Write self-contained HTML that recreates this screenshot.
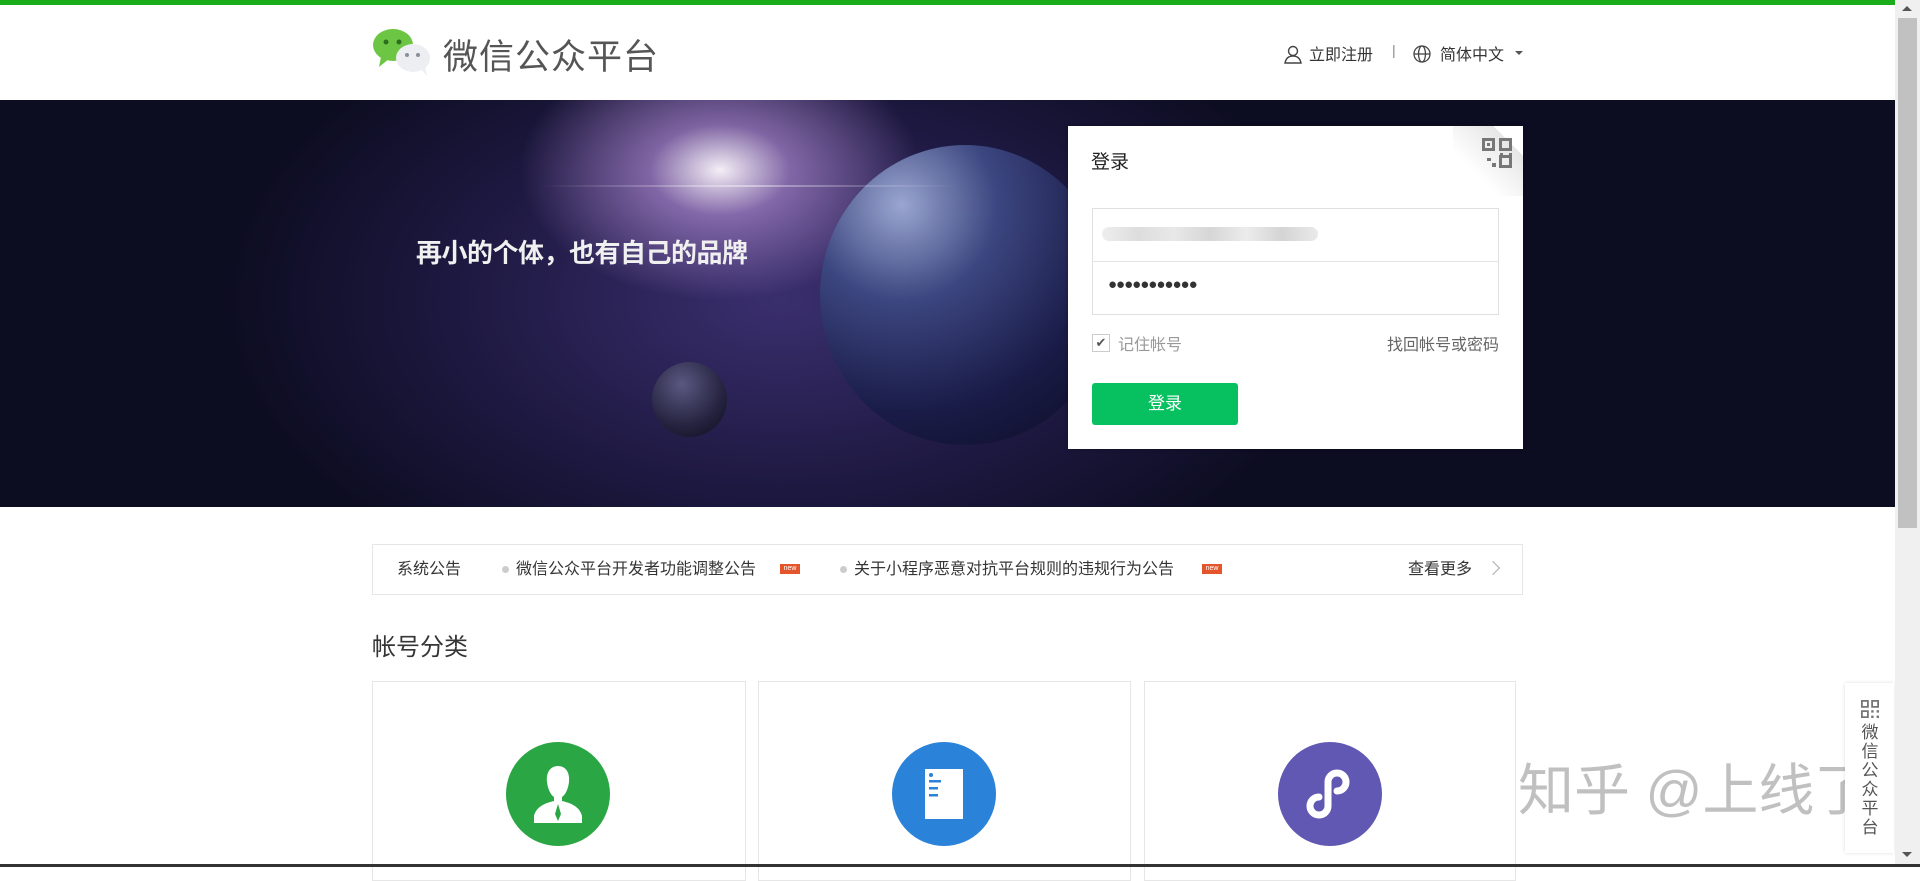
<!DOCTYPE html>
<html><head><meta charset="utf-8"><style>
*{margin:0;padding:0;box-sizing:border-box}
body{width:1920px;height:867px;overflow:hidden;background:#fff;font-family:"Liberation Sans","Noto Sans CJK SC",sans-serif;position:relative;color:#353535}
.abs{position:absolute}
</style></head><body>
<div class="abs" style="left:0;top:0;width:1895px;height:5px;background:#1aad19"></div>
<!-- logo -->
<svg class="abs" style="left:371px;top:27px" width="62" height="50" viewBox="0 0 62 50">
<ellipse cx="22" cy="18" rx="20" ry="16" fill="#6cc644"/><path d="M10 30 L8 40 L18 32Z" fill="#6cc644"/>
<circle cx="15" cy="15" r="2.5" fill="#2d6e1e"/><circle cx="28" cy="15" r="2.5" fill="#2d6e1e"/>
<ellipse cx="42" cy="31" rx="17" ry="14" fill="#eceef2"/><path d="M50 42 L56 49 L54 40Z" fill="#eceef2"/>
<circle cx="36" cy="28" r="2" fill="#8a8f99"/><circle cx="47" cy="28" r="2" fill="#8a8f99"/></svg>
<div class="abs" style="left:443px;top:29px;font-size:35px;color:#555;letter-spacing:1px">微信公众平台</div>
<svg class="abs" style="left:1283px;top:44px" width="20" height="20" viewBox="0 0 20 20" fill="none" stroke="#444" stroke-width="1.4"><circle cx="10" cy="7" r="4.5"/><path d="M2 19c1-5 4-7 8-7s7 2 8 7Z"/></svg>
<div class="abs" style="left:1309px;top:41px;font-size:16px;color:#353535">立即注册</div>
<div class="abs" style="left:1392px;top:42px;font-size:14px;color:#888">|</div>
<svg class="abs" style="left:1412px;top:44px" width="20" height="20" viewBox="0 0 20 20" fill="none" stroke="#444" stroke-width="1.3"><circle cx="10" cy="10" r="8"/><ellipse cx="10" cy="10" rx="3.5" ry="8"/><path d="M2 10h16"/></svg>
<div class="abs" style="left:1440px;top:41px;font-size:16px;color:#353535">简体中文</div>
<div class="abs" style="left:1515px;top:51px;border:4px solid transparent;border-top-color:#555"></div>
<!-- banner -->
<div class="abs" style="left:0;top:100px;width:1895px;height:407px;overflow:hidden;background:radial-gradient(ellipse 200px 130px at 720px 70px,rgba(255,250,255,.95),rgba(190,150,225,.6) 35%,rgba(60,40,110,0) 100%),radial-gradient(ellipse 550px 320px at 780px 200px,#3a2f6e,#1d1840 60%,#0d0d22 100%),#0e0e22">
 <div class="abs" style="left:820px;top:45px;width:290px;height:300px;border-radius:50%;background:radial-gradient(circle at 28% 20%,#9aa6d0,#3c4680 30%,#1a1c48 65%,#0a0a20)"></div>
 <div class="abs" style="left:652px;top:262px;width:75px;height:75px;border-radius:50%;background:radial-gradient(circle at 40% 30%,#5a5880,#25233f 60%,#0d0c1e)"></div>
 <div class="abs" style="left:540px;top:85px;width:420px;height:2px;background:linear-gradient(90deg,rgba(255,255,255,0),rgba(255,255,255,.4),rgba(255,255,255,0))"></div>
 <div class="abs" style="left:416px;top:133px;font-size:26px;color:#f0f0f0;font-weight:bold;letter-spacing:-0.5px">再小的个体，也有自己的品牌</div>
</div>
<!-- login -->
<div class="abs" style="left:1068px;top:126px;width:455px;height:323px;background:#fff;box-shadow:0 0 4px rgba(0,0,0,.3);overflow:hidden">
 <div class="abs" style="right:-40px;top:-40px;width:110px;height:110px;background:linear-gradient(225deg,#fff 50%,#e6e6e6 50%,#fff 80%)"></div>
 <svg class="abs" style="left:414px;top:12px" width="30" height="30" viewBox="0 0 30 30" fill="#777"><path d="M0 0h13v13H0zM3 3v7h7V3zM5 5h3v3H5z" fill-rule="evenodd"/><path d="M17 0h13v13H17zM20 3v7h7V3z" fill-rule="evenodd"/><path d="M17 17h13v13H17zM20 20v7h7v-7z" fill-rule="evenodd"/><rect x="18" y="15" width="3" height="2"/><rect x="27" y="15" width="3" height="2"/><rect x="5" y="20" width="4" height="3"/><rect x="10" y="25" width="4" height="4"/></svg>
 <div class="abs" style="left:23px;top:21px;font-size:19px;color:#222">登录</div>
 <div class="abs" style="left:24px;top:82px;width:407px;height:107px;border:1px solid #e0e0e0"></div>
 <div class="abs" style="left:24px;top:135px;width:407px;height:1px;background:#e4e4e4"></div>
 <div class="abs" style="left:34px;top:101px;width:216px;height:14px;border-radius:7px;background:linear-gradient(90deg,#eee,#ddd,#e8e8e8,#d6d6d6,#ececec,#d4d4d4,#eaeaea)"></div>
 <div class="abs" style="left:40px;top:150px;font-size:15px;color:#333;letter-spacing:-1px">●●●●●●●●●●●</div>
 <div class="abs" style="left:24px;top:208px;width:18px;height:18px;border:1px solid #ccc;color:#555;font-size:13px;text-align:center;line-height:16px">✔</div>
 <div class="abs" style="left:50px;top:205px;font-size:16px;color:#999">记住帐号</div>
 <div class="abs" style="right:24px;top:205px;font-size:16px;color:#666">找回帐号或密码</div>
 <div class="abs" style="left:24px;top:257px;width:146px;height:42px;background:#07c160;border-radius:3px;color:#fff;font-size:17px;text-align:center;line-height:42px">登录</div>
</div>
<!-- notice -->
<div class="abs" style="left:372px;top:544px;width:1151px;height:51px;border:1px solid #e6e6e6;font-size:16px;line-height:49px;color:#353535">
 <span class="abs" style="left:24px">系统公告</span>
 <span class="abs" style="left:129px;top:21px;width:7px;height:7px;border-radius:50%;background:#ccc"></span>
 <span class="abs" style="left:143px">微信公众平台开发者功能调整公告</span>
 <span class="abs" style="left:407px;top:19px;width:20px;height:10px;background:#e5552c;color:#fff;font-size:7px;line-height:10px;text-align:center">new</span>
 <span class="abs" style="left:467px;top:21px;width:7px;height:7px;border-radius:50%;background:#ccc"></span>
 <span class="abs" style="left:481px">关于小程序恶意对抗平台规则的违规行为公告</span>
 <span class="abs" style="left:829px;top:19px;width:20px;height:10px;background:#e5552c;color:#fff;font-size:7px;line-height:10px;text-align:center">new</span>
 <span class="abs" style="left:1035px">查看更多</span>
 <span class="abs" style="left:1115px;top:18px;width:10px;height:10px;border-right:1.5px solid #aaa;border-top:1.5px solid #aaa;transform:rotate(45deg)"></span>
</div>
<div class="abs" style="left:372px;top:627px;font-size:24px;color:#353535">帐号分类</div>
<!-- cards -->
<div class="abs" style="left:372px;top:681px;width:374px;height:200px;border:1px solid #e6e6e6"></div>
<div class="abs" style="left:758px;top:681px;width:373px;height:200px;border:1px solid #e6e6e6"></div>
<div class="abs" style="left:1144px;top:681px;width:372px;height:200px;border:1px solid #e6e6e6"></div>
<svg class="abs" style="left:506px;top:742px" width="104" height="104" viewBox="0 0 104 104"><circle cx="52" cy="52" r="52" fill="#2aa644"/><path d="M52 24c-8 0-12 7-11 16 1 8 4 13 7 15v4c-9 2-18 6-20 15v7h48v-7c-2-9-11-13-20-15v-4c3-2 6-7 7-15 1-9-3-16-11-16z" fill="#fff"/><path d="M52 62l-3 10 3 7 3-7z" fill="#2aa644"/></svg>
<svg class="abs" style="left:892px;top:742px" width="104" height="104" viewBox="0 0 104 104"><circle cx="52" cy="52" r="52" fill="#2b82d9"/><rect x="33" y="27" width="38" height="50" fill="#fff"/><g fill="#2b82d9"><circle cx="39" cy="33" r="2"/><rect x="37" y="38" width="12" height="2.5"/><rect x="37" y="45" width="9" height="2.5"/><rect x="37" y="52" width="9" height="2.5"/></g></svg>
<svg class="abs" style="left:1278px;top:742px" width="104" height="104" viewBox="0 0 104 104"><circle cx="52" cy="52" r="52" fill="#6058b3"/><path d="M41 55 a9 9 0 1 0 9 9 V40 a9 9 0 1 1 9 9" fill="none" stroke="#fff" stroke-width="7" stroke-linecap="round"/></svg>
<!-- watermark -->
<div class="abs" style="left:1518px;top:746px;font-size:56px;color:rgba(130,130,130,.5);white-space:nowrap">知乎 @上线了</div>
<!-- side float -->
<div class="abs" style="left:1845px;top:683px;width:49px;height:170px;background:#fff;box-shadow:0 0 4px rgba(0,0,0,.12)">
 <svg class="abs" style="left:16px;top:17px" width="18" height="18" viewBox="0 0 30 30" fill="#777"><path d="M0 0h13v13H0zM3 3v7h7V3z" fill-rule="evenodd"/><path d="M17 0h13v13H17zM20 3v7h7V3z" fill-rule="evenodd"/><path d="M0 17h13v13H0zM3 20v7h7v-7z" fill-rule="evenodd"/><rect x="17" y="17" width="4" height="4"/><rect x="26" y="17" width="4" height="4"/><rect x="17" y="26" width="4" height="4"/><rect x="26" y="26" width="4" height="4"/></svg>
 <div class="abs" style="left:15px;top:40px;width:20px;font-size:17px;line-height:19px;color:#555;text-align:center">微信公众平台</div>
</div>
<!-- scrollbar -->
<div class="abs" style="left:1895px;top:0;width:25px;height:867px;background:#f0f0f0"></div>
<div class="abs" style="left:1898px;top:18px;width:19px;height:510px;background:#c1c1c1"></div>
<div class="abs" style="left:1902px;top:6px;border:5px solid transparent;border-bottom-color:#555;border-top:0"></div>
<div class="abs" style="left:1902px;top:852px;border:5px solid transparent;border-top-color:#555;border-bottom:0"></div>
<div class="abs" style="left:0;top:864px;width:1920px;height:3px;background:#333"></div>
</body></html>
